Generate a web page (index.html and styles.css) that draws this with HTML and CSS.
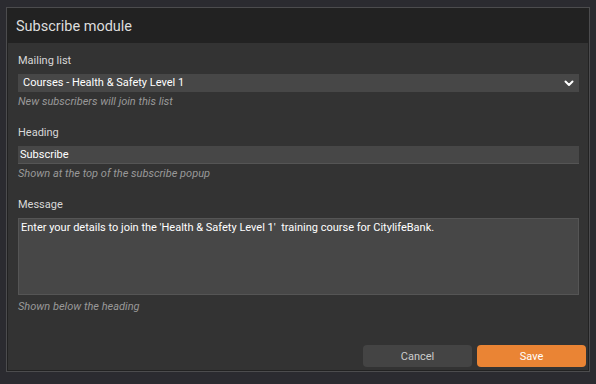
FILE: index.html
```html
<!DOCTYPE html>
<html lang="en">
<head>
    <meta charset="UTF-8">
    <meta name="viewport" content="width=device-width, initial-scale=1.0">
    <title>Subscribe module</title>
    <link rel="stylesheet" href="styles.css">
</head>
<body>
    <div class="dialog">
        <div class="dialog-header">
            <h1>Subscribe module</h1>
        </div>

        <div class="dialog-body">
            <div class="field">
                <label>Mailing list</label>
                <div class="select">
                    <span>Courses - Health &amp; Safety Level 1</span>
                    <svg class="chevron" width="10" height="7" viewBox="0 0 10 7">
                        <path d="M1.5 1.5 L5 5 L8.5 1.5" fill="none" stroke="#fff" stroke-width="2" stroke-linecap="round" stroke-linejoin="round"/>
                    </svg>
                </div>
                <div class="hint">New subscribers will join this list</div>
            </div>

            <div class="field">
                <label>Heading</label>
                <div class="input">Subscribe</div>
                <div class="hint">Shown at the top of the subscribe popup</div>
            </div>

            <div class="field">
                <label>Message</label>
                <div class="textarea">Enter your details to join the 'Health &amp; Safety Level 1'&nbsp; training course for CitylifeBank.</div>
                <div class="hint">Shown below the heading</div>
            </div>
        </div>

        <div class="dialog-footer">
            <button class="btn btn-cancel">Cancel</button>
            <button class="btn btn-save">Save</button>
        </div>
    </div>
</body>
</html>
```

FILE: styles.css
```css
body, html {
    margin: 0;
    padding: 0;
    height: 100%;
    font-family: Roboto, "Liberation Sans", Arial, sans-serif;
    background-color: #2b2b30;
    overflow: hidden;
}

.dialog {
    position: absolute;
    left: 6px;
    top: 7px;
    width: 582px;
    height: 363px;
    border: 1px solid #4c4c4e;
    background-color: #333;
    display: flex;
    flex-direction: column;
    box-shadow: 0 0 0 1px #222 inset;
}

.dialog-header {
    background-color: #222;
    height: 34px;
    display: flex;
    align-items: center;
    padding-left: 8px;
    margin: 1px 1px 0 1px;
}

.dialog-header h1 {
    margin: 0;
    font-size: 14.5px;
    font-weight: 400;
    color: #ddd;
}

.dialog-body {
    padding: 10px 10px 0 11px;
}

.field {
    margin-bottom: 16px;
}

.field label {
    display: block;
    font-size: 11px;
    line-height: 15px;
    color: #d8d8d8;
    margin-bottom: 6px;
}

.select, .input {
    height: 18px;
    background-color: #474747;
    color: #fff;
    font-size: 11px;
    line-height: 18px;
    box-sizing: border-box;
}

.select {
    display: flex;
    align-items: center;
    justify-content: space-between;
    padding: 0 5px 0 5px;
}

.chevron {
    margin-top: 1px;
}

.input {
    padding-left: 2px;
    border-bottom: 1px solid #555;
    line-height: 17px;
}

.textarea {
    height: 77px;
    box-sizing: border-box;
    background-color: #474747;
    border: 1px solid #555;
    color: #fff;
    font-size: 11px;
    line-height: 15px;
    padding: 1px 2px;
}

.hint {
    margin-top: 3px;
    font-size: 11px;
    line-height: 14px;
    font-style: italic;
    color: #999;
}

.field:last-child .hint {
    margin-top: 5px;
}

.dialog-footer {
    margin-top: auto;
    display: flex;
    justify-content: flex-end;
    gap: 5px;
    padding: 0 3px 4px 0;
}

.btn {
    width: 109px;
    height: 22px;
    border: none;
    border-radius: 4px;
    font-family: Roboto, "Liberation Sans", Arial, sans-serif;
    font-size: 11px;
    padding: 0;
}

.btn-cancel {
    background-color: #444;
    color: #ccc;
}

.btn-save {
    background-color: #ea8434;
    color: #fff;
}
```
